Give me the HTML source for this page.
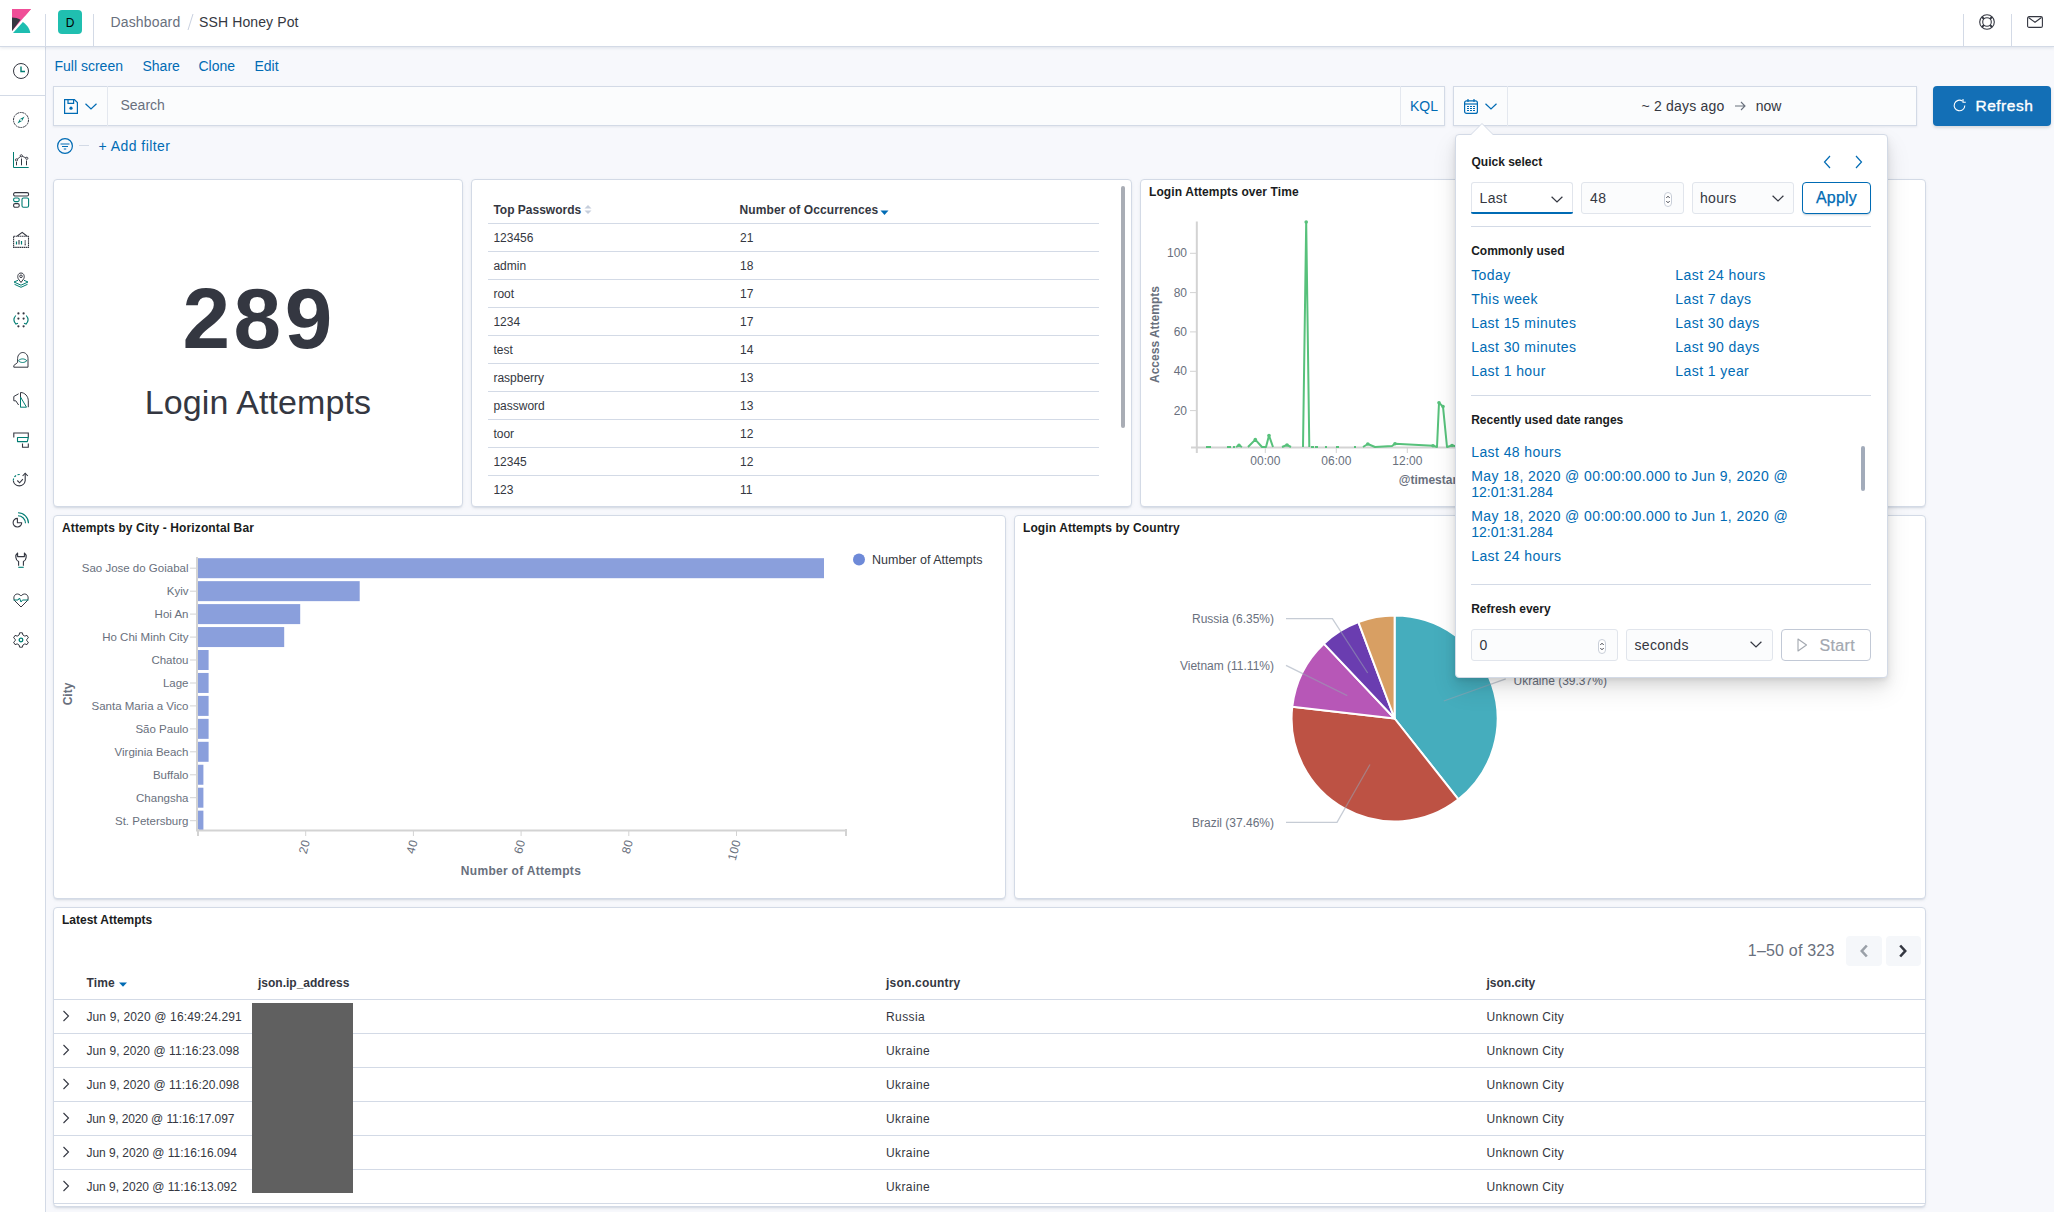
<!DOCTYPE html>
<html><head><meta charset="utf-8"><title>SSH Honey Pot - Kibana</title>
<style>
html,body{margin:0;padding:0;}
body{width:2054px;height:1212px;position:relative;overflow:hidden;background:#F7F8FC;font-family:"Liberation Sans", sans-serif;}
.t{position:absolute;white-space:nowrap;font-family:"Liberation Sans", sans-serif;}
.b{position:absolute;box-sizing:border-box;}
.i{position:absolute;overflow:visible;}
</style></head><body>
<div class="b" style="left:0px;top:0px;width:2054px;height:47px;background:#fff;border-bottom:1px solid #D3DAE6;box-shadow:0 1px 3px rgba(152,162,179,0.25);z-index:5"></div>
<svg class="i" style="left:12px;top:9px;z-index:6" width="19" height="24" viewBox="0 0 19 24" fill="none"><path d="M0 0H19L0 22Z" fill="#F04E98"/><path d="M0 8.5C3 8.5 6 9.2 8.5 10.7L0 22Z" fill="#343741"/><path d="M1 24L10.9 12.9C14.6 15.5 17.8 19.5 18.3 24Z" fill="#1EBDB0" /><path d="M0 0H19L0 22Z" fill="#F04E98" clip-path="inset(0 0 14.5px 0)"/></svg>
<div class="b" style="left:45px;top:14px;width:1px;height:33px;background:#D3DAE6;z-index:6"></div>
<div class="b" style="left:93px;top:14px;width:1px;height:33px;background:#D3DAE6;z-index:6"></div>
<div class="b" style="left:1963px;top:14px;width:1px;height:33px;background:#D3DAE6;z-index:6"></div>
<div class="b" style="left:2011px;top:14px;width:1px;height:33px;background:#D3DAE6;z-index:6"></div>
<div class="b" style="left:58px;top:10px;width:24px;height:24px;background:#20BFB0;border-radius:4px;z-index:6"></div>
<div class="t" style="left:70.00px;top:16.84px;font-size:12px;line-height:12px;font-weight:400;color:#000;transform:translateX(-50%);z-index:7">D</div>
<div class="t" style="left:110.50px;top:15.15px;font-size:14px;line-height:14px;font-weight:400;color:#69707D;letter-spacing:0.15px;z-index:7">Dashboard</div>
<svg class="i" style="left:187px;top:14px;z-index:7" width="7" height="16" viewBox="0 0 7 16" fill="none"><path d="M1 16L6 0" stroke="#C9D1E0" stroke-width="1"/></svg>
<div class="t" style="left:199.00px;top:15.15px;font-size:14px;line-height:14px;font-weight:400;color:#343741;letter-spacing:0.12px;z-index:7">SSH Honey Pot</div>
<svg class="i" style="left:1979px;top:14px;z-index:7" width="16" height="16" viewBox="0 0 16 16" fill="none"><circle cx="8" cy="8" r="7.3" stroke="#343741" stroke-width="1.1"/><circle cx="8" cy="8" r="4.3" stroke="#343741" stroke-width="1.1"/><path d="M3 3L5 5M13 3L11 5M3 13L5 11M13 13L11 11" stroke="#343741" stroke-width="1.8"/></svg>
<svg class="i" style="left:2027px;top:16px;z-index:7" width="16" height="12" viewBox="0 0 16 12" fill="none"><rect x="0.6" y="0.6" width="14.8" height="10.8" rx="1.5" stroke="#343741" stroke-width="1.1"/><path d="M1.5 1.5L8 6.3L14.5 1.5" stroke="#343741" stroke-width="1.1"/></svg>
<div class="b" style="left:0px;top:47px;width:46px;height:1165px;background:#fff;border-right:1px solid #D3DAE6;z-index:4"></div>
<div class="b" style="left:0px;top:95px;width:45px;height:1px;background:#D3DAE6;z-index:4"></div>
<div style="position:absolute;left:0;top:0;z-index:5"><svg class="i" style="left:13px;top:63px;" width="16" height="16" viewBox="0 0 16 16" fill="none"><circle cx="8" cy="8" r="7.5" stroke="#343741"/><path d="M8 3.5V8.5H12" stroke="#017D73" stroke-width="1.4"/></svg>
<svg class="i" style="left:13px;top:112px;" width="16" height="16" viewBox="0 0 16 16" fill="none"><circle cx="8" cy="8" r="7.5" stroke="#343741" stroke-dasharray="2 0.6"/><path d="M11.5 4.5L9 9 4.5 11.5 7 7z" fill="#017D73"/><circle cx="8" cy="8" r="1" fill="#fff"/></svg>
<svg class="i" style="left:13px;top:152px;" width="16" height="16" viewBox="0 0 16 16" fill="none"><path d="M0.5 0V15.5H15.7" stroke="#017D73"/><path d="M3.5 13.3V10M8.5 13.3V6.5M13.5 13.3V8.5" stroke="#343741"/><path d="M3.5 7.9L8.3 3.8L13.8 6.3" stroke="#343741" stroke-width="0.9"/><circle cx="3.5" cy="7.9" r="1.1" stroke="#343741" stroke-width="0.9" fill="#fff"/><circle cx="8.3" cy="3.8" r="1.1" stroke="#343741" stroke-width="0.9" fill="#fff"/><circle cx="13.8" cy="6.3" r="1.1" stroke="#343741" stroke-width="0.9" fill="#fff"/></svg>
<svg class="i" style="left:13px;top:192px;" width="16" height="16" viewBox="0 0 16 16" fill="none"><rect x="0.6" y="0.6" width="15" height="3.4" rx="1.5" stroke="#343741" stroke-width="1.1"/><rect x="0.6" y="6" width="5.6" height="3.6" rx="1.5" stroke="#017D73" stroke-width="1.1"/><rect x="0.6" y="11.6" width="5.6" height="3.6" rx="1.5" stroke="#343741" stroke-width="1.1"/><rect x="9" y="6" width="6.6" height="9.3" rx="1.5" stroke="#017D73" stroke-width="1.1"/></svg>
<svg class="i" style="left:13px;top:232px;" width="16" height="16" viewBox="0 0 16 16" fill="none"><path d="M0.6 4.2H15.5V15.4H0.6Z" stroke="#343741" stroke-width="1.1" stroke-dasharray="1.6 0.5"/><path d="M4.3 4L9.2 0.4L13.8 4" stroke="#343741" stroke-width="1.1"/><path d="M3.5 12.5V9.5M8.5 12.5V9" stroke="#017D73" stroke-width="1.2"/><path d="M6 12.5V8M11.5 9H13M11.5 11H13M11.5 12.8H13" stroke="#343741" stroke-width="1.1"/></svg>
<svg class="i" style="left:13px;top:272px;" width="16" height="16" viewBox="0 0 16 16" fill="none"><path d="M8 10.5L5.3 6.8C4.3 5.3 4.5 1 8 1S11.7 5.3 10.7 6.8Z" stroke="#343741" stroke-linejoin="round"/><circle cx="8" cy="4.3" r="1.3" stroke="#343741"/><path d="M5 8.3L1 10L8 13.2L15 10L11 8.3" stroke="#017D73"/><path d="M1.5 12.3L8 15.3L14.5 12.3" stroke="#017D73"/></svg>
<svg class="i" style="left:13px;top:312px;" width="16" height="16" viewBox="0 0 16 16" fill="none"><circle cx="5.4" cy="1.4" r="1.1" fill="#343741"/><circle cx="10.6" cy="1.4" r="1.1" fill="#343741"/><circle cx="5.4" cy="6.6" r="1.1" fill="#343741"/><circle cx="10.6" cy="6.6" r="1.1" fill="#343741"/><circle cx="5.4" cy="14.3" r="1.1" fill="#343741"/><circle cx="10.6" cy="14.3" r="1.1" fill="#343741"/><path d="M2.8 3.5C0.6 6 0.6 9.5 2.8 12L5 11.2M13.2 3.5C15.4 6 15.4 9.5 13.2 12L11 11.2" stroke="#017D73" stroke-width="1.1"/></svg>
<svg class="i" style="left:13px;top:352px;" width="16" height="16" viewBox="0 0 16 16" fill="none"><path d="M0.8 15.2H15V6.5C15 3 12.5 0.5 9.8 0.5S4.6 3 4.6 6.5V10.5L0.8 13.5Z" stroke="#343741" stroke-linejoin="round"/><path d="M5.5 8.7C7.5 6.3 11.5 6.3 13.8 8.7C11.5 11.1 7.5 11.1 5.5 8.7Z" stroke="#017D73"/></svg>
<svg class="i" style="left:13px;top:392px;" width="16" height="16" viewBox="0 0 16 16" fill="none"><path d="M7.5 15.2V0.5C11.8 0.5 15.3 4.3 15.3 8.8V15.2" stroke="#343741"/><path d="M7.5 5L13.5 15.2H7.5Z" stroke="#017D73" stroke-linejoin="round"/><path d="M5.6 1.8L0.8 4.5V8.8H2.8L5.6 13" stroke="#343741" stroke-linejoin="round"/></svg>
<svg class="i" style="left:13px;top:432px;" width="16" height="16" viewBox="0 0 16 16" fill="none"><path d="M0.8 5.4V1H15.3V5.4" stroke="#343741" stroke-width="1.1"/><path d="M4.5 5.5H15.3L14.3 9.6H4.5Z" stroke="#017D73" stroke-width="1.1" stroke-linejoin="round"/><path d="M9.5 11.5V15.2H15.3V11.5" stroke="#343741" stroke-width="1.1"/></svg>
<svg class="i" style="left:13px;top:472px;" width="16" height="16" viewBox="0 0 16 16" fill="none"><path d="M0.3 8.6A6 6 0 0 0 12.2 8.6V1.5" stroke="#343741" stroke-width="1.1"/><path d="M9.6 4L12.2 1.2L14.8 4" stroke="#343741" stroke-width="1.1"/><path d="M0.3 8.6A6 6 0 0 1 7 2.6" stroke="#017D73" stroke-width="1.1" stroke-dasharray="2.2 1.6"/><path d="M4.3 8.5L6.6 10.8L9.9 7.2" stroke="#343741" stroke-width="1.1"/></svg>
<svg class="i" style="left:13px;top:512px;" width="16" height="16" viewBox="0 0 16 16" fill="none"><path d="M4.4 10.7V6.4A4.3 4.3 0 1 0 8.7 10.7Z" stroke="#343741" stroke-width="1.1" stroke-linejoin="round"/><path d="M5 0.8A10.5 10.5 0 0 1 15.5 11.3M5 3.8A7.5 7.5 0 0 1 12.5 11.3" stroke="#017D73" stroke-width="1.1"/></svg>
<svg class="i" style="left:13px;top:552px;" width="16" height="16" viewBox="0 0 16 16" fill="none"><path d="M5.6 13.8V9.6C2.2 8 2 2.8 4.6 1V4.6H11.4V1C14 2.8 13.8 8 10.4 9.6V13.8" stroke="#343741" stroke-width="1.1" stroke-linejoin="round"/><path d="M5.3 15.3H10.7" stroke="#017D73" stroke-width="1.1"/></svg>
<svg class="i" style="left:13px;top:592px;" width="16" height="16" viewBox="0 0 16 16" fill="none"><path d="M8 15L2 9C0 7 0.5 2 4.5 2C6.5 2 8 4 8 4S9.5 2 11.5 2C15.5 2 16 7 14 9Z" stroke="#343741"/><path d="M0.5 8H5L6.5 6L8 10L9.5 8H15.5" stroke="#017D73"/></svg>
<svg class="i" style="left:13px;top:632px;" width="16" height="16" viewBox="0 0 16 16" fill="none"><path d="M6.6 0.8H9.4L9.9 3 11.8 4.1 14 3.4 15.4 5.8 13.7 7.4V8.6L15.4 10.2 14 12.6 11.8 11.9 9.9 13 9.4 15.2H6.6L6.1 13 4.2 11.9 2 12.6 0.6 10.2 2.3 8.6V7.4L0.6 5.8 2 3.4 4.2 4.1 6.1 3Z" stroke="#343741" stroke-linejoin="round"/><circle cx="8" cy="8" r="1.8" stroke="#017D73" stroke-width="1.3"/></svg>
</div><div class="t" style="left:54.50px;top:59.15px;font-size:14px;line-height:14px;font-weight:400;color:#006BB4;">Full screen</div>
<div class="t" style="left:142.50px;top:59.15px;font-size:14px;line-height:14px;font-weight:400;color:#006BB4;">Share</div>
<div class="t" style="left:198.50px;top:59.15px;font-size:14px;line-height:14px;font-weight:400;color:#006BB4;">Clone</div>
<div class="t" style="left:254.40px;top:59.15px;font-size:14px;line-height:14px;font-weight:400;color:#006BB4;">Edit</div>
<div class="b" style="left:53px;top:86px;width:1392px;height:40px;background:#FBFCFD;border:1px solid #D3DAE6;box-sizing:border-box;box-shadow:0 1px 2px rgba(152,162,179,0.2)"></div>
<div class="b" style="left:107px;top:86px;width:1px;height:40px;background:#E4E8EF"></div>
<div class="b" style="left:1400px;top:86px;width:1px;height:40px;background:#E4E8EF"></div>
<svg class="i" style="left:64px;top:99px;" width="14" height="15" viewBox="0 0 14 15" fill="none"><path d="M0.6 0.6H10.4L13.4 3.6V14.4H0.6Z" stroke="#006BB4" stroke-width="1.2"/><path d="M4 0.6V4.4H9.6V0.6" stroke="#006BB4" stroke-width="1.2"/><circle cx="7" cy="9.2" r="1.6" fill="#006BB4"/></svg>
<svg class="i" style="left:85px;top:103px;" width="12" height="7" viewBox="0 0 12 7" fill="none"><path d="M0.5 0.8L6 6L11.5 0.8" stroke="#006BB4" stroke-width="1.2"/></svg>
<div class="t" style="left:120.50px;top:97.95px;font-size:14px;line-height:14px;font-weight:400;color:#69707D;">Search</div>
<div class="t" style="left:1410.00px;top:98.85px;font-size:14px;line-height:14px;font-weight:400;color:#006BB4;">KQL</div>
<div class="b" style="left:1453px;top:86px;width:464px;height:40px;background:#FBFCFD;border:1px solid #D3DAE6;box-sizing:border-box;box-shadow:0 1px 2px rgba(152,162,179,0.2)"></div>
<div class="b" style="left:1507px;top:86px;width:1px;height:40px;background:#E4E8EF"></div>
<svg class="i" style="left:1464px;top:99px;" width="14" height="15" viewBox="0 0 14 15" fill="none"><rect x="0.6" y="1.8" width="12.8" height="12.6" rx="2" stroke="#006BB4" stroke-width="1.2"/><path d="M0.6 5H13.4" stroke="#006BB4" stroke-width="1.2"/><path d="M4 0V3M10 0V3" stroke="#006BB4" stroke-width="1.2"/><path d="M3 7.5H5M6 7.5H8M9 7.5H11M3 9.5H5M6 9.5H8M9 9.5H11M3 11.5H5M6 11.5H8M9 11.5H11" stroke="#006BB4" stroke-width="1"/></svg>
<svg class="i" style="left:1485px;top:103px;" width="12" height="7" viewBox="0 0 12 7" fill="none"><path d="M0.5 0.8L6 6L11.5 0.8" stroke="#006BB4" stroke-width="1.2"/></svg>
<div class="t" style="left:1641.50px;top:99.05px;font-size:14px;line-height:14px;font-weight:400;color:#343741;letter-spacing:0.2px;">~ 2 days ago</div>
<svg class="i" style="left:1735px;top:101px;" width="11" height="10" viewBox="0 0 11 10" fill="none"><path d="M0 5H10M6 1L10 5L6 9" stroke="#69707D" stroke-width="1.1"/></svg>
<div class="t" style="left:1755.80px;top:99.05px;font-size:14px;line-height:14px;font-weight:400;color:#343741;">now</div>
<div class="b" style="left:1933px;top:86px;width:118px;height:40px;background:#136FB6;border-radius:4px;box-shadow:0 2px 3px rgba(0,0,0,0.12)"></div>
<svg class="i" style="left:1953px;top:99px;" width="13" height="13" viewBox="0 0 13 13" fill="none"><path d="M11.8 6.5A5.3 5.3 0 1 1 9.5 2.1" stroke="#fff" stroke-width="1.1"/><path d="M10 0V3.2H12.8" stroke="#fff" stroke-width="1.1"/></svg>
<div class="t" style="left:1975.50px;top:97.78px;font-size:15.5px;line-height:15.5px;font-weight:400;color:#fff;letter-spacing:0.5px;-webkit-text-stroke:0.35px #fff">Refresh</div>
<svg class="i" style="left:57px;top:138px;" width="16" height="16" viewBox="0 0 16 16" fill="none"><circle cx="8" cy="8" r="7.4" stroke="#006BB4" stroke-width="1.2"/><path d="M3.5 6H12.5M5 8.5H11M6.8 11H9.2" stroke="#006BB4" stroke-width="1.2"/></svg>
<div class="b" style="left:79px;top:145px;width:10px;height:1px;background:#D3DAE6"></div>
<div class="t" style="left:98.50px;top:138.95px;font-size:14px;line-height:14px;font-weight:400;color:#006BB4;letter-spacing:0.45px;">+ Add filter</div>

<div class="b" style="left:53px;top:179px;width:410px;height:328px;background:#fff;border:1px solid #D3DAE6;border-radius:4px;box-shadow:0 2px 2px -1px rgba(152,162,179,0.3),0 1px 5px -2px rgba(152,162,179,0.3)"></div>
<div class="b" style="left:471px;top:179px;width:661px;height:328px;background:#fff;border:1px solid #D3DAE6;border-radius:4px;box-shadow:0 2px 2px -1px rgba(152,162,179,0.3),0 1px 5px -2px rgba(152,162,179,0.3)"></div>
<div class="b" style="left:1140px;top:179px;width:786px;height:328px;background:#fff;border:1px solid #D3DAE6;border-radius:4px;box-shadow:0 2px 2px -1px rgba(152,162,179,0.3),0 1px 5px -2px rgba(152,162,179,0.3)"></div>
<div class="b" style="left:53px;top:515px;width:953px;height:384px;background:#fff;border:1px solid #D3DAE6;border-radius:4px;box-shadow:0 2px 2px -1px rgba(152,162,179,0.3),0 1px 5px -2px rgba(152,162,179,0.3)"></div>
<div class="b" style="left:1014px;top:515px;width:912px;height:384px;background:#fff;border:1px solid #D3DAE6;border-radius:4px;box-shadow:0 2px 2px -1px rgba(152,162,179,0.3),0 1px 5px -2px rgba(152,162,179,0.3)"></div>
<div class="b" style="left:53px;top:907px;width:1873px;height:300px;background:#fff;border:1px solid #D3DAE6;border-radius:4px;box-shadow:0 2px 2px -1px rgba(152,162,179,0.3),0 1px 5px -2px rgba(152,162,179,0.3)"></div>
<div class="t" style="left:259.20px;top:275.92px;font-size:85.5px;line-height:85.5px;font-weight:700;color:#343741;transform:translateX(-50%);letter-spacing:3.6px;">289</div>
<div class="t" style="left:258.00px;top:385.12px;font-size:34px;line-height:34px;font-weight:400;color:#343741;transform:translateX(-50%);letter-spacing:0.1px;">Login Attempts</div>
<div class="t" style="left:493.40px;top:203.84px;font-size:12px;line-height:12px;font-weight:700;color:#343741;">Top Passwords</div>
<div class="t" style="left:739.50px;top:203.84px;font-size:12px;line-height:12px;font-weight:700;color:#343741;letter-spacing:0.1px;">Number of Occurrences</div>
<svg class="i" style="left:584px;top:204px" width="8" height="11"><path d="M0.5 4.5L4 1L7.5 4.5Z" fill="#C6CEDB"/><path d="M0.5 6.5L4 10L7.5 6.5Z" fill="#C6CEDB"/></svg><svg class="i" style="left:880px;top:210px" width="9" height="6"><path d="M0.5 0.5H8.5L4.5 5Z" fill="#006BB4"/></svg><div class="b" style="left:488px;top:223px;width:611px;height:1px;background:#D3DAE6"></div>
<div class="t" style="left:493.40px;top:231.54px;font-size:12px;line-height:12px;font-weight:400;color:#343741;">123456</div>
<div class="t" style="left:740.00px;top:231.54px;font-size:12px;line-height:12px;font-weight:400;color:#343741;">21</div>
<div class="b" style="left:488px;top:251px;width:611px;height:1px;background:#D3DAE6"></div>
<div class="t" style="left:493.40px;top:259.54px;font-size:12px;line-height:12px;font-weight:400;color:#343741;">admin</div>
<div class="t" style="left:740.00px;top:259.54px;font-size:12px;line-height:12px;font-weight:400;color:#343741;">18</div>
<div class="b" style="left:488px;top:279px;width:611px;height:1px;background:#D3DAE6"></div>
<div class="t" style="left:493.40px;top:287.54px;font-size:12px;line-height:12px;font-weight:400;color:#343741;">root</div>
<div class="t" style="left:740.00px;top:287.54px;font-size:12px;line-height:12px;font-weight:400;color:#343741;">17</div>
<div class="b" style="left:488px;top:307px;width:611px;height:1px;background:#D3DAE6"></div>
<div class="t" style="left:493.40px;top:315.54px;font-size:12px;line-height:12px;font-weight:400;color:#343741;">1234</div>
<div class="t" style="left:740.00px;top:315.54px;font-size:12px;line-height:12px;font-weight:400;color:#343741;">17</div>
<div class="b" style="left:488px;top:335px;width:611px;height:1px;background:#D3DAE6"></div>
<div class="t" style="left:493.40px;top:343.54px;font-size:12px;line-height:12px;font-weight:400;color:#343741;">test</div>
<div class="t" style="left:740.00px;top:343.54px;font-size:12px;line-height:12px;font-weight:400;color:#343741;">14</div>
<div class="b" style="left:488px;top:363px;width:611px;height:1px;background:#D3DAE6"></div>
<div class="t" style="left:493.40px;top:371.54px;font-size:12px;line-height:12px;font-weight:400;color:#343741;">raspberry</div>
<div class="t" style="left:740.00px;top:371.54px;font-size:12px;line-height:12px;font-weight:400;color:#343741;">13</div>
<div class="b" style="left:488px;top:391px;width:611px;height:1px;background:#D3DAE6"></div>
<div class="t" style="left:493.40px;top:399.54px;font-size:12px;line-height:12px;font-weight:400;color:#343741;">password</div>
<div class="t" style="left:740.00px;top:399.54px;font-size:12px;line-height:12px;font-weight:400;color:#343741;">13</div>
<div class="b" style="left:488px;top:419px;width:611px;height:1px;background:#D3DAE6"></div>
<div class="t" style="left:493.40px;top:427.54px;font-size:12px;line-height:12px;font-weight:400;color:#343741;">toor</div>
<div class="t" style="left:740.00px;top:427.54px;font-size:12px;line-height:12px;font-weight:400;color:#343741;">12</div>
<div class="b" style="left:488px;top:447px;width:611px;height:1px;background:#D3DAE6"></div>
<div class="t" style="left:493.40px;top:455.54px;font-size:12px;line-height:12px;font-weight:400;color:#343741;">12345</div>
<div class="t" style="left:740.00px;top:455.54px;font-size:12px;line-height:12px;font-weight:400;color:#343741;">12</div>
<div class="b" style="left:488px;top:475px;width:611px;height:1px;background:#D3DAE6"></div>
<div class="t" style="left:493.40px;top:483.54px;font-size:12px;line-height:12px;font-weight:400;color:#343741;">123</div>
<div class="t" style="left:740.00px;top:483.54px;font-size:12px;line-height:12px;font-weight:400;color:#343741;">11</div>
<div class="b" style="left:1121px;top:186px;width:4px;height:242px;background:#A9ADB5;border-radius:2px"></div>
<svg class="i" style="left:0;top:0" width="2054" height="1212" viewBox="0 0 2054 1212" font-family='"Liberation Sans", sans-serif'><text x="1149" y="196" font-size="12" font-weight="700" fill="#1a1c21" letter-spacing="0.1">Login Attempts over Time</text><line x1="1196.8" y1="221.5" x2="1196.8" y2="448" stroke="#D3D3D3" stroke-width="2"/><line x1="1191" y1="447.6" x2="1870" y2="447.6" stroke="#D3D3D3" stroke-width="2"/><line x1="1190" y1="410.6" x2="1196.8" y2="410.6" stroke="#D3D3D3" stroke-width="1"/><text x="1187" y="414.6" font-size="12" fill="#69707D" text-anchor="end">20</text><line x1="1190" y1="371.3" x2="1196.8" y2="371.3" stroke="#D3D3D3" stroke-width="1"/><text x="1187" y="375.3" font-size="12" fill="#69707D" text-anchor="end">40</text><line x1="1190" y1="331.9" x2="1196.8" y2="331.9" stroke="#D3D3D3" stroke-width="1"/><text x="1187" y="335.9" font-size="12" fill="#69707D" text-anchor="end">60</text><line x1="1190" y1="292.6" x2="1196.8" y2="292.6" stroke="#D3D3D3" stroke-width="1"/><text x="1187" y="296.6" font-size="12" fill="#69707D" text-anchor="end">80</text><line x1="1190" y1="253.3" x2="1196.8" y2="253.3" stroke="#D3D3D3" stroke-width="1"/><text x="1187" y="257.3" font-size="12" fill="#69707D" text-anchor="end">100</text><line x1="1196.8" y1="447" x2="1196.8" y2="453" stroke="#D3D3D3" stroke-width="2"/><line x1="1265.3" y1="447" x2="1265.3" y2="453" stroke="#D3D3D3" stroke-width="1"/><text x="1265.3" y="465" font-size="12" fill="#69707D" text-anchor="middle">00:00</text><line x1="1336.3" y1="447" x2="1336.3" y2="453" stroke="#D3D3D3" stroke-width="1"/><text x="1336.3" y="465" font-size="12" fill="#69707D" text-anchor="middle">06:00</text><line x1="1407.3" y1="447" x2="1407.3" y2="453" stroke="#D3D3D3" stroke-width="1"/><text x="1407.3" y="465" font-size="12" fill="#69707D" text-anchor="middle">12:00</text><text x="1398.7" y="484" font-size="12" font-weight="700" fill="#69707D">@timestamp per 30 minutes</text><text transform="translate(1158.5 334.5) rotate(-90)" font-size="12" font-weight="700" fill="#69707D" text-anchor="middle">Access Attempts</text><polyline points="1206,447 1211,447" fill="none" stroke="#57C17B" stroke-width="2" stroke-linejoin="round"/><polyline points="1227,447 1231,447" fill="none" stroke="#57C17B" stroke-width="2" stroke-linejoin="round"/><polyline points="1233,447 1235,447" fill="none" stroke="#57C17B" stroke-width="2" stroke-linejoin="round"/><polyline points="1236,447 1239,445.3 1242,447" fill="none" stroke="#57C17B" stroke-width="2" stroke-linejoin="round"/><circle cx="1239" cy="445.3" r="1.8" fill="#57C17B"/><polyline points="1248,447 1255.3,439.6 1262,447 1266,447 1269,435.5 1273,447" fill="none" stroke="#57C17B" stroke-width="2" stroke-linejoin="round"/><circle cx="1255.3" cy="439.6" r="1.8" fill="#57C17B"/><circle cx="1269" cy="435.5" r="1.8" fill="#57C17B"/><polyline points="1282,447 1287,445 1291,447" fill="none" stroke="#57C17B" stroke-width="2" stroke-linejoin="round"/><circle cx="1287" cy="445" r="1.8" fill="#57C17B"/><polyline points="1303,447 1306.2,222 1309.3,447" fill="none" stroke="#57C17B" stroke-width="2" stroke-linejoin="round"/><circle cx="1306.2" cy="222" r="1.8" fill="#57C17B"/><polyline points="1311,447 1314,447" fill="none" stroke="#57C17B" stroke-width="2" stroke-linejoin="round"/><polyline points="1315,447 1318,447" fill="none" stroke="#57C17B" stroke-width="2" stroke-linejoin="round"/><polyline points="1325,447 1327,447" fill="none" stroke="#57C17B" stroke-width="2" stroke-linejoin="round"/><polyline points="1336,447 1339,447" fill="none" stroke="#57C17B" stroke-width="2" stroke-linejoin="round"/><polyline points="1354,447 1356,447" fill="none" stroke="#57C17B" stroke-width="2" stroke-linejoin="round"/><polyline points="1363,447 1367.8,444 1375,447 1392,446 1395,443.7 1433,445.7 1437,447 1439,402.7 1443,406.6 1447,447 1452,445.5 1460,447" fill="none" stroke="#57C17B" stroke-width="2" stroke-linejoin="round"/><circle cx="1367.8" cy="444" r="1.8" fill="#57C17B"/><circle cx="1395" cy="443.7" r="1.8" fill="#57C17B"/><circle cx="1433" cy="445.7" r="1.8" fill="#57C17B"/><circle cx="1439" cy="402.7" r="1.8" fill="#57C17B"/><circle cx="1443" cy="406.6" r="1.8" fill="#57C17B"/><circle cx="1452" cy="445.5" r="1.8" fill="#57C17B"/><text x="62" y="531.9" font-size="12" font-weight="700" fill="#1a1c21" letter-spacing="0.12">Attempts by City - Horizontal Bar</text><rect x="198" y="558.20" width="626.0" height="20" fill="#8A9FDC"/><line x1="190" y1="568.2" x2="197" y2="568.2" stroke="#D3D3D3" stroke-width="1"/><text x="188.5" y="572.4" font-size="11.5" fill="#69707D" text-anchor="end">Sao Jose do Goiabal</text><rect x="198" y="581.15" width="161.7" height="20" fill="#8A9FDC"/><line x1="190" y1="591.2" x2="197" y2="591.2" stroke="#D3D3D3" stroke-width="1"/><text x="188.5" y="595.4" font-size="11.5" fill="#69707D" text-anchor="end">Kyiv</text><rect x="198" y="604.10" width="102.2" height="20" fill="#8A9FDC"/><line x1="190" y1="614.1" x2="197" y2="614.1" stroke="#D3D3D3" stroke-width="1"/><text x="188.5" y="618.3" font-size="11.5" fill="#69707D" text-anchor="end">Hoi An</text><rect x="198" y="627.05" width="86.2" height="20" fill="#8A9FDC"/><line x1="190" y1="637.1" x2="197" y2="637.1" stroke="#D3D3D3" stroke-width="1"/><text x="188.5" y="641.3" font-size="11.5" fill="#69707D" text-anchor="end">Ho Chi Minh City</text><rect x="198" y="650.00" width="10.6" height="20" fill="#8A9FDC"/><line x1="190" y1="660.0" x2="197" y2="660.0" stroke="#D3D3D3" stroke-width="1"/><text x="188.5" y="664.2" font-size="11.5" fill="#69707D" text-anchor="end">Chatou</text><rect x="198" y="672.95" width="10.6" height="20" fill="#8A9FDC"/><line x1="190" y1="683.0" x2="197" y2="683.0" stroke="#D3D3D3" stroke-width="1"/><text x="188.5" y="687.2" font-size="11.5" fill="#69707D" text-anchor="end">Lage</text><rect x="198" y="695.90" width="10.6" height="20" fill="#8A9FDC"/><line x1="190" y1="705.9" x2="197" y2="705.9" stroke="#D3D3D3" stroke-width="1"/><text x="188.5" y="710.1" font-size="11.5" fill="#69707D" text-anchor="end">Santa Maria a Vico</text><rect x="198" y="718.85" width="10.6" height="20" fill="#8A9FDC"/><line x1="190" y1="728.9" x2="197" y2="728.9" stroke="#D3D3D3" stroke-width="1"/><text x="188.5" y="733.1" font-size="11.5" fill="#69707D" text-anchor="end">São Paulo</text><rect x="198" y="741.80" width="10.6" height="20" fill="#8A9FDC"/><line x1="190" y1="751.8" x2="197" y2="751.8" stroke="#D3D3D3" stroke-width="1"/><text x="188.5" y="756.0" font-size="11.5" fill="#69707D" text-anchor="end">Virginia Beach</text><rect x="198" y="764.75" width="5.4" height="20" fill="#8A9FDC"/><line x1="190" y1="774.8" x2="197" y2="774.8" stroke="#D3D3D3" stroke-width="1"/><text x="188.5" y="779.0" font-size="11.5" fill="#69707D" text-anchor="end">Buffalo</text><rect x="198" y="787.70" width="5.4" height="20" fill="#8A9FDC"/><line x1="190" y1="797.7" x2="197" y2="797.7" stroke="#D3D3D3" stroke-width="1"/><text x="188.5" y="801.9" font-size="11.5" fill="#69707D" text-anchor="end">Changsha</text><rect x="198" y="810.65" width="5.4" height="20" fill="#8A9FDC"/><line x1="190" y1="820.7" x2="197" y2="820.7" stroke="#D3D3D3" stroke-width="1"/><text x="188.5" y="824.9" font-size="11.5" fill="#69707D" text-anchor="end">St. Petersburg</text><line x1="197" y1="557" x2="197" y2="831" stroke="#D3D3D3" stroke-width="2"/><line x1="196" y1="830.6" x2="846" y2="830.6" stroke="#D3D3D3" stroke-width="2"/><line x1="846" y1="829" x2="846" y2="836" stroke="#D3D3D3" stroke-width="2"/><line x1="198" y1="829" x2="198" y2="836" stroke="#D3D3D3" stroke-width="2"/><line x1="305.7" y1="830" x2="305.7" y2="836" stroke="#D3D3D3" stroke-width="1"/><text transform="translate(310.0 841) rotate(-75)" font-size="12" fill="#69707D" text-anchor="end" letter-spacing="0.3">20</text><line x1="413.4" y1="830" x2="413.4" y2="836" stroke="#D3D3D3" stroke-width="1"/><text transform="translate(417.7 841) rotate(-75)" font-size="12" fill="#69707D" text-anchor="end" letter-spacing="0.3">40</text><line x1="521.1" y1="830" x2="521.1" y2="836" stroke="#D3D3D3" stroke-width="1"/><text transform="translate(525.4 841) rotate(-75)" font-size="12" fill="#69707D" text-anchor="end" letter-spacing="0.3">60</text><line x1="628.8" y1="830" x2="628.8" y2="836" stroke="#D3D3D3" stroke-width="1"/><text transform="translate(633.1 841) rotate(-75)" font-size="12" fill="#69707D" text-anchor="end" letter-spacing="0.3">80</text><line x1="736.5" y1="830" x2="736.5" y2="836" stroke="#D3D3D3" stroke-width="1"/><text transform="translate(740.8 841) rotate(-75)" font-size="12" fill="#69707D" text-anchor="end" letter-spacing="0.3">100</text><text x="521" y="874.5" font-size="12" font-weight="700" fill="#69707D" text-anchor="middle" letter-spacing="0.3">Number of Attempts</text><text transform="translate(72 694) rotate(-90)" font-size="12" font-weight="700" fill="#69707D" text-anchor="middle">City</text><circle cx="859" cy="559.5" r="6" fill="#6E8AD8"/><text x="872" y="564" font-size="12.5" fill="#343741">Number of Attempts</text><text x="1023" y="531.9" font-size="12" font-weight="700" fill="#1a1c21" letter-spacing="0.1">Login Attempts by Country</text><path d="M1394.6,718.5 L1394.60,615.50 A103,103 0 0 1 1458.39,799.37 Z" fill="#45ADBD" stroke="#fff" stroke-width="2" stroke-linejoin="round"/><path d="M1394.6,718.5 L1458.39,799.37 A103,103 0 0 1 1292.28,706.68 Z" fill="#BD5244" stroke="#fff" stroke-width="2" stroke-linejoin="round"/><path d="M1394.6,718.5 L1292.28,706.68 A103,103 0 0 1 1323.81,643.68 Z" fill="#B757B7" stroke="#fff" stroke-width="2" stroke-linejoin="round"/><path d="M1394.6,718.5 L1323.81,643.68 A103,103 0 0 1 1358.43,622.06 Z" fill="#6A3DB0" stroke="#fff" stroke-width="2" stroke-linejoin="round"/><path d="M1394.6,718.5 L1358.43,622.06 A103,103 0 0 1 1394.60,615.50 Z" fill="#D89F63" stroke="#fff" stroke-width="2" stroke-linejoin="round"/><polyline points="1286,618.7 1332.4,618.7 1367.7,673" fill="none" stroke="rgba(152,162,179,0.55)" stroke-width="1.3"/><polyline points="1286,665.3 1347.3,695.6" fill="none" stroke="rgba(152,162,179,0.55)" stroke-width="1.3"/><polyline points="1286,822.4 1337,822.4 1370,764.5" fill="none" stroke="rgba(152,162,179,0.55)" stroke-width="1.3"/><polyline points="1505.8,678.9 1443.8,701" fill="none" stroke="rgba(152,162,179,0.55)" stroke-width="1.3"/><text x="1274" y="623" font-size="12" fill="#69707D" text-anchor="end">Russia (6.35%)</text><text x="1274" y="669.5" font-size="12" fill="#69707D" text-anchor="end">Vietnam (11.11%)</text><text x="1274" y="826.5" font-size="12" fill="#69707D" text-anchor="end">Brazil (37.46%)</text><text x="1513.5" y="685" font-size="12" fill="#69707D">Ukraine (39.37%)</text></svg>
<div class="t" style="left:62.00px;top:913.84px;font-size:12px;line-height:12px;font-weight:700;color:#1a1c21;">Latest Attempts</div>
<div class="t" style="left:1747.80px;top:943.15px;font-size:16px;line-height:16px;font-weight:400;color:#69707D;letter-spacing:0.2px;">1–50 of 323</div>
<div class="b" style="left:1846px;top:936px;width:36px;height:30px;background:#F5F7FA;border-radius:4px"></div>
<div class="b" style="left:1886px;top:936px;width:35px;height:30px;background:#F5F7FA;border-radius:4px"></div>
<svg class="i" style="left:1859px;top:944px" width="10" height="14"><path d="M7.8 1.5L2.8 7L7.8 12.5" stroke="#9AA0A8" stroke-width="2.6" fill="none"/></svg><svg class="i" style="left:1898px;top:944px" width="10" height="14"><path d="M2.2 1.5L7.2 7L2.2 12.5" stroke="#343741" stroke-width="2.6" fill="none"/></svg><div class="t" style="left:86.40px;top:977.14px;font-size:12px;line-height:12px;font-weight:700;color:#343741;letter-spacing:0.2px;">Time</div>
<svg class="i" style="left:119px;top:982px" width="8" height="6"><path d="M0 0.5H8L4 4.8Z" fill="#006BB4"/></svg><div class="t" style="left:258.00px;top:977.14px;font-size:12px;line-height:12px;font-weight:700;color:#343741;">json.ip_address</div>
<div class="t" style="left:886.00px;top:977.14px;font-size:12px;line-height:12px;font-weight:700;color:#343741;letter-spacing:0.2px;">json.country</div>
<div class="t" style="left:1486.50px;top:977.14px;font-size:12px;line-height:12px;font-weight:700;color:#343741;">json.city</div>
<div class="b" style="left:54px;top:999px;width:1871px;height:1px;background:#D3DAE6"></div>
<svg class="i" style="left:62px;top:1010px" width="8" height="12"><path d="M1.5 1L6.5 6L1.5 11" stroke="#343741" stroke-width="1.1" fill="none"/></svg><div class="t" style="left:86.40px;top:1010.94px;font-size:12px;line-height:12px;font-weight:400;color:#343741;letter-spacing:0.15px;">Jun 9, 2020 @ 16:49:24.291</div>
<div class="t" style="left:886.00px;top:1010.94px;font-size:12px;line-height:12px;font-weight:400;color:#343741;letter-spacing:0.4px;">Russia</div>
<div class="t" style="left:1486.50px;top:1010.94px;font-size:12px;line-height:12px;font-weight:400;color:#343741;letter-spacing:0.3px;">Unknown City</div>
<div class="b" style="left:54px;top:1033px;width:1871px;height:1px;background:#D3DAE6"></div>
<svg class="i" style="left:62px;top:1044px" width="8" height="12"><path d="M1.5 1L6.5 6L1.5 11" stroke="#343741" stroke-width="1.1" fill="none"/></svg><div class="t" style="left:86.40px;top:1044.94px;font-size:12px;line-height:12px;font-weight:400;color:#343741;letter-spacing:0.08px;">Jun 9, 2020 @ 11:16:23.098</div>
<div class="t" style="left:886.00px;top:1044.94px;font-size:12px;line-height:12px;font-weight:400;color:#343741;letter-spacing:0.4px;">Ukraine</div>
<div class="t" style="left:1486.50px;top:1044.94px;font-size:12px;line-height:12px;font-weight:400;color:#343741;letter-spacing:0.3px;">Unknown City</div>
<div class="b" style="left:54px;top:1067px;width:1871px;height:1px;background:#D3DAE6"></div>
<svg class="i" style="left:62px;top:1078px" width="8" height="12"><path d="M1.5 1L6.5 6L1.5 11" stroke="#343741" stroke-width="1.1" fill="none"/></svg><div class="t" style="left:86.40px;top:1078.94px;font-size:12px;line-height:12px;font-weight:400;color:#343741;letter-spacing:0.08px;">Jun 9, 2020 @ 11:16:20.098</div>
<div class="t" style="left:886.00px;top:1078.94px;font-size:12px;line-height:12px;font-weight:400;color:#343741;letter-spacing:0.4px;">Ukraine</div>
<div class="t" style="left:1486.50px;top:1078.94px;font-size:12px;line-height:12px;font-weight:400;color:#343741;letter-spacing:0.3px;">Unknown City</div>
<div class="b" style="left:54px;top:1101px;width:1871px;height:1px;background:#D3DAE6"></div>
<svg class="i" style="left:62px;top:1112px" width="8" height="12"><path d="M1.5 1L6.5 6L1.5 11" stroke="#343741" stroke-width="1.1" fill="none"/></svg><div class="t" style="left:86.40px;top:1112.94px;font-size:12px;line-height:12px;font-weight:400;color:#343741;letter-spacing:-0.11px;">Jun 9, 2020 @ 11:16:17.097</div>
<div class="t" style="left:886.00px;top:1112.94px;font-size:12px;line-height:12px;font-weight:400;color:#343741;letter-spacing:0.4px;">Ukraine</div>
<div class="t" style="left:1486.50px;top:1112.94px;font-size:12px;line-height:12px;font-weight:400;color:#343741;letter-spacing:0.3px;">Unknown City</div>
<div class="b" style="left:54px;top:1135px;width:1871px;height:1px;background:#D3DAE6"></div>
<svg class="i" style="left:62px;top:1146px" width="8" height="12"><path d="M1.5 1L6.5 6L1.5 11" stroke="#343741" stroke-width="1.1" fill="none"/></svg><div class="t" style="left:86.40px;top:1146.94px;font-size:12px;line-height:12px;font-weight:400;color:#343741;letter-spacing:-0.01px;">Jun 9, 2020 @ 11:16:16.094</div>
<div class="t" style="left:886.00px;top:1146.94px;font-size:12px;line-height:12px;font-weight:400;color:#343741;letter-spacing:0.4px;">Ukraine</div>
<div class="t" style="left:1486.50px;top:1146.94px;font-size:12px;line-height:12px;font-weight:400;color:#343741;letter-spacing:0.3px;">Unknown City</div>
<div class="b" style="left:54px;top:1169px;width:1871px;height:1px;background:#D3DAE6"></div>
<svg class="i" style="left:62px;top:1180px" width="8" height="12"><path d="M1.5 1L6.5 6L1.5 11" stroke="#343741" stroke-width="1.1" fill="none"/></svg><div class="t" style="left:86.40px;top:1180.94px;font-size:12px;line-height:12px;font-weight:400;color:#343741;letter-spacing:-0.01px;">Jun 9, 2020 @ 11:16:13.092</div>
<div class="t" style="left:886.00px;top:1180.94px;font-size:12px;line-height:12px;font-weight:400;color:#343741;letter-spacing:0.4px;">Ukraine</div>
<div class="t" style="left:1486.50px;top:1180.94px;font-size:12px;line-height:12px;font-weight:400;color:#343741;letter-spacing:0.3px;">Unknown City</div>
<div class="b" style="left:54px;top:1203px;width:1871px;height:1px;background:#D3DAE6"></div>
<div class="b" style="left:252px;top:1003px;width:101px;height:190px;background:#606060"></div>
<div class="b" style="left:1455px;top:134px;width:433px;height:544px;background:#fff;border:1px solid #D3DAE6;border-radius:4px;box-shadow:0 12px 24px rgba(0,0,0,0.1),0 6px 12px rgba(0,0,0,0.08),0 2px 4px rgba(0,0,0,0.06);z-index:20"></div>
<svg class="i" style="left:1469px;top:122px;z-index:21" width="26" height="14"><path d="M1 13.5L13 1.5L25 13.5" fill="#fff" stroke="#D3DAE6" stroke-width="1"/><rect x="0" y="13" width="26" height="2" fill="#fff"/></svg><div class="t" style="left:1471.50px;top:155.84px;font-size:12px;line-height:12px;font-weight:700;color:#1a1c21;z-index:21;">Quick select</div>
<svg class="i" style="left:1823px;top:155px;z-index:21" width="8" height="14"><path d="M7 1L1.5 7L7 13" stroke="#006BB4" stroke-width="1.2" fill="none"/></svg><svg class="i" style="left:1855px;top:155px;z-index:21" width="8" height="14"><path d="M1 1L6.5 7L1 13" stroke="#006BB4" stroke-width="1.2" fill="none"/></svg><div class="b" style="left:1471px;top:182px;width:102px;height:32px;background:#fff;border:1px solid #E1E5EC;border-bottom:none;border-radius:3px 3px 0 0;z-index:21;"></div>
<div class="b" style="left:1471px;top:212px;width:102px;height:2px;background:#006BB4;border-radius:0 0 2px 2px;z-index:22"></div>
<div class="t" style="left:1479.60px;top:190.95px;font-size:14px;line-height:14px;font-weight:400;color:#343741;letter-spacing:0.3px;z-index:21;">Last</div>
<svg class="i" style="left:1551px;top:196px;z-index:21" width="12" height="7"><path d="M0.6 0.8L6.0 6L11.4 0.8" stroke="#343741" stroke-width="1.2" fill="none"/></svg><div class="b" style="left:1581px;top:182px;width:103px;height:32px;background:#FBFCFD;border:1px solid #E1E5EC;border-radius:3px;z-index:21;"></div>
<div class="t" style="left:1590.00px;top:190.95px;font-size:14px;line-height:14px;font-weight:400;color:#343741;letter-spacing:0.4px;z-index:21;">48</div>
<svg class="i" style="left:1664px;top:192px;z-index:21" width="8" height="15"><rect x="0.5" y="0.5" width="7" height="14" rx="3.5" fill="#fff" stroke="#C9CFD9"/><path d="M2.3 6L4 4.2L5.7 6M2.3 9L4 10.8L5.7 9" stroke="#343741" stroke-width="0.9" fill="none"/></svg><div class="b" style="left:1692px;top:182px;width:102px;height:32px;background:#FBFCFD;border:1px solid #E1E5EC;border-radius:3px;z-index:21;"></div>
<div class="t" style="left:1700.00px;top:190.95px;font-size:14px;line-height:14px;font-weight:400;color:#343741;letter-spacing:0.3px;z-index:21;">hours</div>
<svg class="i" style="left:1772px;top:195px;z-index:21" width="12" height="7"><path d="M0.6 0.8L6.0 6L11.4 0.8" stroke="#343741" stroke-width="1.2" fill="none"/></svg><div class="b" style="left:1802px;top:182px;width:69px;height:32px;background:#fff;border:1px solid #006BB4;border-radius:4px;box-shadow:0 2px 2px -1px rgba(54,97,126,0.3);z-index:21;"></div>
<div class="t" style="left:1816.00px;top:190.25px;font-size:16px;line-height:16px;font-weight:400;color:#006BB4;letter-spacing:0.2px;-webkit-text-stroke:0.25px #006BB4;z-index:21;">Apply</div>
<div class="b" style="left:1471px;top:226px;width:400px;height:1px;background:#D3DAE6;z-index:21;"></div>
<div class="t" style="left:1471.20px;top:244.94px;font-size:12px;line-height:12px;font-weight:700;color:#1a1c21;z-index:21;">Commonly used</div>
<div class="t" style="left:1471.20px;top:268.05px;font-size:14px;line-height:14px;font-weight:400;color:#006BB4;letter-spacing:0.42px;z-index:21;">Today</div>
<div class="t" style="left:1675.30px;top:268.05px;font-size:14px;line-height:14px;font-weight:400;color:#006BB4;letter-spacing:0.42px;z-index:21;">Last 24 hours</div>
<div class="t" style="left:1471.20px;top:292.10px;font-size:14px;line-height:14px;font-weight:400;color:#006BB4;letter-spacing:0.42px;z-index:21;">This week</div>
<div class="t" style="left:1675.30px;top:292.10px;font-size:14px;line-height:14px;font-weight:400;color:#006BB4;letter-spacing:0.42px;z-index:21;">Last 7 days</div>
<div class="t" style="left:1471.20px;top:316.15px;font-size:14px;line-height:14px;font-weight:400;color:#006BB4;letter-spacing:0.42px;z-index:21;">Last 15 minutes</div>
<div class="t" style="left:1675.30px;top:316.15px;font-size:14px;line-height:14px;font-weight:400;color:#006BB4;letter-spacing:0.42px;z-index:21;">Last 30 days</div>
<div class="t" style="left:1471.20px;top:340.20px;font-size:14px;line-height:14px;font-weight:400;color:#006BB4;letter-spacing:0.42px;z-index:21;">Last 30 minutes</div>
<div class="t" style="left:1675.30px;top:340.20px;font-size:14px;line-height:14px;font-weight:400;color:#006BB4;letter-spacing:0.42px;z-index:21;">Last 90 days</div>
<div class="t" style="left:1471.20px;top:364.25px;font-size:14px;line-height:14px;font-weight:400;color:#006BB4;letter-spacing:0.42px;z-index:21;">Last 1 hour</div>
<div class="t" style="left:1675.30px;top:364.25px;font-size:14px;line-height:14px;font-weight:400;color:#006BB4;letter-spacing:0.42px;z-index:21;">Last 1 year</div>
<div class="b" style="left:1471px;top:395px;width:400px;height:1px;background:#D3DAE6;z-index:21;"></div>
<div class="t" style="left:1471.20px;top:413.84px;font-size:12px;line-height:12px;font-weight:700;color:#1a1c21;z-index:21;">Recently used date ranges</div>
<div class="t" style="left:1471.20px;top:445.15px;font-size:14px;line-height:14px;font-weight:400;color:#006BB4;letter-spacing:0.42px;z-index:21;">Last 48 hours</div>
<div class="t" style="left:1471.20px;top:468.65px;font-size:14px;line-height:14px;font-weight:400;color:#006BB4;letter-spacing:0.4px;z-index:21;">May 18, 2020 @ 00:00:00.000 to Jun 9, 2020 @</div>
<div class="t" style="left:1471.20px;top:484.65px;font-size:14px;line-height:14px;font-weight:400;color:#006BB4;z-index:21;">12:01:31.284</div>
<div class="t" style="left:1471.20px;top:508.65px;font-size:14px;line-height:14px;font-weight:400;color:#006BB4;letter-spacing:0.4px;z-index:21;">May 18, 2020 @ 00:00:00.000 to Jun 1, 2020 @</div>
<div class="t" style="left:1471.20px;top:524.65px;font-size:14px;line-height:14px;font-weight:400;color:#006BB4;z-index:21;">12:01:31.284</div>
<div class="t" style="left:1471.20px;top:549.35px;font-size:14px;line-height:14px;font-weight:400;color:#006BB4;letter-spacing:0.42px;z-index:21;">Last 24 hours</div>
<div class="b" style="left:1861px;top:446px;width:4px;height:45px;background:#98A2B3;border-radius:2px;opacity:0.9;z-index:21;"></div>
<div class="b" style="left:1471px;top:584px;width:400px;height:1px;background:#D3DAE6;z-index:21;"></div>
<div class="t" style="left:1471.20px;top:602.84px;font-size:12px;line-height:12px;font-weight:700;color:#1a1c21;z-index:21;">Refresh every</div>
<div class="b" style="left:1471px;top:629px;width:147px;height:32px;background:#FBFCFD;border:1px solid #E1E5EC;border-radius:3px;z-index:21;"></div>
<div class="t" style="left:1479.50px;top:637.65px;font-size:14px;line-height:14px;font-weight:400;color:#343741;z-index:21;">0</div>
<svg class="i" style="left:1598px;top:639px;z-index:21" width="8" height="15"><rect x="0.5" y="0.5" width="7" height="14" rx="3.5" fill="#fff" stroke="#C9CFD9"/><path d="M2.3 6L4 4.2L5.7 6M2.3 9L4 10.8L5.7 9" stroke="#343741" stroke-width="0.9" fill="none"/></svg><div class="b" style="left:1626px;top:629px;width:147px;height:32px;background:#FBFCFD;border:1px solid #E1E5EC;border-radius:3px;z-index:21;"></div>
<div class="t" style="left:1634.50px;top:637.65px;font-size:14px;line-height:14px;font-weight:400;color:#343741;letter-spacing:0.3px;z-index:21;">seconds</div>
<svg class="i" style="left:1750px;top:641px;z-index:21" width="12" height="7"><path d="M0.6 0.8L6.0 6L11.4 0.8" stroke="#343741" stroke-width="1.2" fill="none"/></svg><div class="b" style="left:1781px;top:629px;width:90px;height:32px;background:#fff;border:1px solid #C2C9D6;border-radius:4px;z-index:21;"></div>
<svg class="i" style="left:1797px;top:638px;z-index:21" width="11" height="14"><path d="M1 1L9.5 7L1 13Z" stroke="#A3A8B0" stroke-width="1.1" fill="none" stroke-linejoin="round"/></svg><div class="t" style="left:1819.50px;top:637.65px;font-size:16px;line-height:16px;font-weight:400;color:#A3A8B0;letter-spacing:0.35px;-webkit-text-stroke:0.2px #A3A8B0;z-index:21;">Start</div>

</body></html>
